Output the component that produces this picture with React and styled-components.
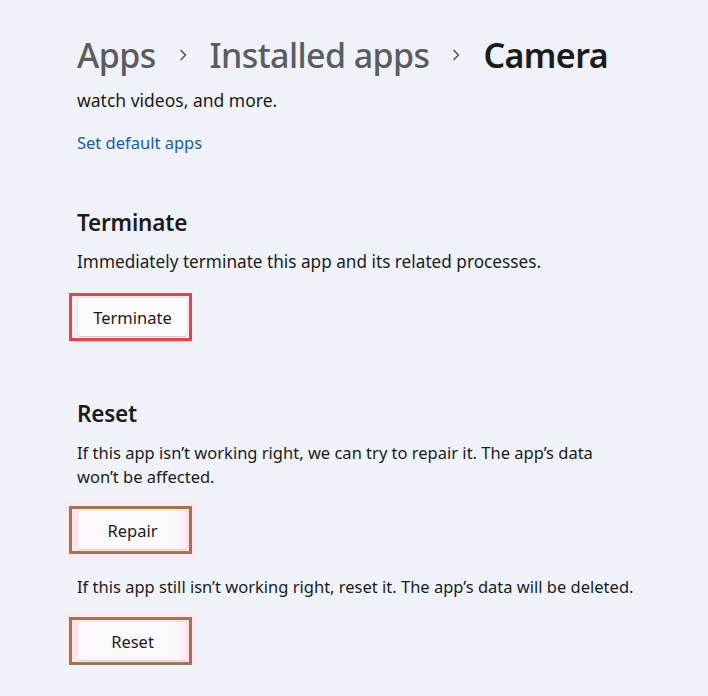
import styled, { createGlobalStyle } from 'styled-components';

const Global = createGlobalStyle`
  html, body {
    margin: 0;
    padding: 0;
    background: #eff3f9;
  }
  body {
    font-family: "Noto Sans", "Open Sans", sans-serif;
    color: #1b1b1b;
  }
`;

const Page = styled.main`
  padding: 31px 0 0 77px;
  width: 631px;
  box-sizing: content-box;
`;

const Breadcrumb = styled.nav`
  display: flex;
  align-items: center;
  gap: 18px;
  height: 48px;
  font-size: 34px;
  letter-spacing: -0.6px;
`;

const Crumb = styled.span`
  color: ${(p) => (p.current ? '#1b1b1b' : '#5c5c5e')};
  font-weight: ${(p) => (p.current ? 600 : 500)};
`;

const Chevron = styled.svg`
  width: 12px;
  height: 12px;
  margin: 0 3px;
  flex: none;
`;

const Text = styled.p`
  margin: ${(p) => p.top || 0}px 0 0;
  font-size: ${(p) => p.size || 16.5}px;
  line-height: 24px;
`;

const Link = styled.a`
  display: block;
  margin-top: 19px;
  font-size: 16.5px;
  line-height: 24px;
  color: #1a5aa6;
  text-decoration: none;
`;

const Heading = styled.h2`
  margin: ${(p) => p.top}px 0 0;
  font-size: 22.5px;
  line-height: 30px;
  font-weight: 600;
  letter-spacing: -0.2px;
`;

const Frame = styled.div`
  display: inline-flex;
  margin: ${(p) => p.top}px 0 0 -8px;
  padding: 1px 1px 1px 5px;
  border: 3px solid ${(p) => (p.tone === 'red' ? '#e8414a' : '#a4744f')};
  background: ${(p) => (p.tone === 'red' ? 'transparent' : '#ffe4f2')};
  box-shadow: ${(p) => (p.tone === 'red' ? 'none' : '0 0 0 4px #fde9f4')};
`;

const Button = styled.button`
  width: 111px;
  height: 40px;
  border: 1px solid #e4e4e8;
  border-bottom-color: #cfcfd4;
  border-radius: 4px;
  background: ${(p) => (p.tone === 'red' ? '#fbfbfc' : 'linear-gradient(90deg, #fbf9fd 88%, #fde8f3)')};
  font-family: "Noto Sans", "Open Sans", sans-serif;
  font-size: 16.5px;
  color: #1b1b1b;
  padding: 0;
`;

const Arrow = () => (
  <Chevron viewBox="0 0 12 12">
    <path d="M4 1.5 L8.5 6 L4 10.5" fill="none" stroke="#5c5c5e" strokeWidth="1.7" strokeLinecap="round" strokeLinejoin="round" />
  </Chevron>
);

const App = () => {
  return (
    <>
      <Global />
      <Page>
        <Breadcrumb>
          <Crumb>Apps</Crumb>
          <Arrow />
          <Crumb>Installed apps</Crumb>
          <Arrow />
          <Crumb current>Camera</Crumb>
        </Breadcrumb>
        <Text top={9} size={17.5}>watch videos, and more.</Text>
        <Link href="#">Set default apps</Link>

        <Heading top={53}>Terminate</Heading>
        <Text top={12} size={17.2}>Immediately terminate this app and its related processes.</Text>
        <Frame tone="red" top={19}>
          <Button tone="red">Terminate</Button>
        </Frame>

        <Heading top={58}>Reset</Heading>
        <Text top={12}>
          If this app isn’t working right, we can try to repair it. The app’s data
          <br />
          won’t be affected.
        </Text>
        <Frame top={17}>
          <Button>Repair</Button>
        </Frame>
        <Text top={21}>If this app still isn’t working right, reset it. The app’s data will be deleted.</Text>
        <Frame top={18}>
          <Button>Reset</Button>
        </Frame>
      </Page>
    </>
  );
};

export default App;
